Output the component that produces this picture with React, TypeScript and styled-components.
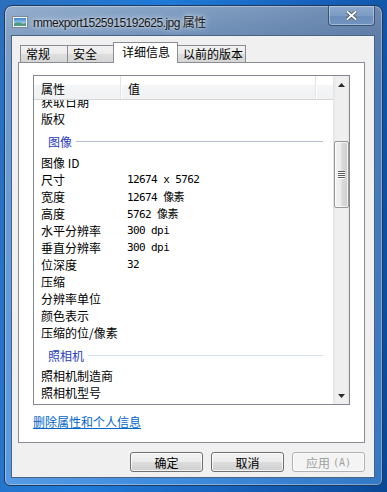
import styled, {createGlobalStyle} from "styled-components";

const GlobalStyle = createGlobalStyle`
	html, body {
		margin: 0;
		padding: 0;
		height: 492px;
		overflow: hidden;
	}
	body {
		background: linear-gradient(100deg, #2a6fbe 0%, #1f7ad8 35%, #155fb8 70%, #0a4896 100%);
		font-family: "Noto Sans CJK SC", "Noto Sans", sans-serif;
	}
`;

const Desktop = styled.div`
	width: 387px;
	height: 492px;
	padding: 5px 0 0 4px;
	box-sizing: border-box;
`;

const Frame = styled.div`
	width: 379px;
	height: 481px;
	box-sizing: border-box;
	display: flex;
	flex-direction: column;
	padding: 0 7px 7px 6px;
	border: 1px solid #20385a;
	border-radius: 8px 8px 6px 6px;
	background:
		linear-gradient(90deg, rgba(255, 255, 255, 0.12) 0%, rgba(255, 255, 255, 0) 40%, rgba(0, 30, 80, 0.18) 100%),
		linear-gradient(180deg, #86a3c6 0px, #7393bb 29px, #5d8fcb 70px, #3f8de0 100%);
	box-shadow: inset 0 0 0 1px rgba(255, 255, 255, 0.35);
`;

const TitleBar = styled.div`
	height: 29px;
	display: flex;
	align-items: center;
	flex-shrink: 0;
`;

const TitleIcon = styled.svg`
	margin: 2px 0 0 1px;
	flex-shrink: 0;
`;

const TitleText = styled.span`
	margin: 1px 0 0 5px;
	font-family: "Liberation Sans", "Noto Sans CJK SC", sans-serif;
	font-size: 12px;
	letter-spacing: -0.5px;
	color: #141414;
	text-shadow: 0 0 6px rgba(255, 255, 255, 0.9), 0 0 2px rgba(255, 255, 255, 0.6);
	white-space: nowrap;
`;

const CloseButton = styled.div`
	margin-left: auto;
	align-self: flex-start;
	width: 47px;
	height: 20px;
	box-sizing: border-box;
	display: flex;
	align-items: center;
	justify-content: center;
	border: 1px solid #3a5476;
	border-top: none;
	border-radius: 0 0 4px 4px;
	background: linear-gradient(180deg, #8eaacd 0%, #7c9cc4 50%, #6a8dba 51%, #7394c0 100%);
	box-shadow: inset 0 0 0 1px rgba(255, 255, 255, 0.35);
`;

const Client = styled.div`
	flex: 1;
	display: flex;
	flex-direction: column;
	box-sizing: border-box;
	padding: 6px 9px 5px 6px;
	background: #f0f0f0;
	border: 1px solid #4a6384;
`;

const TabStrip = styled.div`
	height: 20px;
	display: flex;
	align-items: flex-end;
	padding-left: 2px;
	flex-shrink: 0;
`;

const Tab = styled.div<{$active?: boolean; $w: number}>`
	width: ${p => p.$w}px;
	height: ${p => (p.$active ? 21 : 17)}px;
	margin-left: -1px;
	margin-bottom: ${p => (p.$active ? -1 : 0)}px;
	padding-left: ${p => (p.$active ? 8 : 5)}px;
	box-sizing: border-box;
	position: relative;
	z-index: ${p => (p.$active ? 2 : 1)};
	border: 1px solid #898c95;
	border-bottom: none;
	background: ${p => (p.$active ? "#ffffff" : "linear-gradient(180deg, #f2f2f2 0%, #ebebeb 50%, #dedede 51%, #d6d6d6 100%)")};
	font-size: 12px;
	line-height: ${p => (p.$active ? 18 : 16)}px;
	color: #000;
	white-space: nowrap;

	&:first-child {
		margin-left: 0;
	}
`;

const Panel = styled.div`
	height: 381px;
	box-sizing: border-box;
	display: flex;
	flex-direction: column;
	padding: 12px 14px 0 14px;
	background: #ffffff;
	border: 1px solid #898c95;
	flex-shrink: 0;
`;

const ListBox = styled.div`
	height: 330px;
	box-sizing: border-box;
	display: flex;
	border: 1px solid #828790;
	background: #ffffff;
`;

const ListMain = styled.div`
	flex: 1;
	display: flex;
	flex-direction: column;
	min-width: 0;
`;

const Header = styled.div`
	height: 24px;
	box-sizing: border-box;
	display: flex;
	flex-shrink: 0;
	background: linear-gradient(180deg, #ffffff 0%, #ffffff 40%, #f4f5f7 41%, #f1f2f4 100%);
	border-bottom: 1px solid #d5d5d5;
`;

const HeadCell = styled.div<{$w?: number}>`
	${p => (p.$w ? `width: ${p.$w}px;` : "flex: 1;")}
	box-sizing: border-box;
	padding: 1px 0 0 7px;
	display: flex;
	align-items: center;
	font-size: 12px;
	color: #000;
	border-right: ${p => (p.$w ? "1px solid #e3e4e6" : "none")};
	box-shadow: ${p => (p.$w ? "1px 0 0 #ffffff" : "none")};
`;

const Body = styled.div`
	flex: 1;
	overflow: hidden;
`;

const Rows = styled.div`
	margin-top: -7px;
`;

const Row = styled.div`
	height: 17px;
	display: flex;
	align-items: center;
	white-space: nowrap;
`;

const Name = styled.span`
	width: 87px;
	box-sizing: border-box;
	padding-left: 7px;
	font-size: 12px;
	color: #000;
`;

const Value = styled.span`
	padding-left: 6px;
	font-family: "DejaVu Sans Mono", "Noto Sans CJK SC", monospace;
	font-size: 11px;
	letter-spacing: -0.6px;
	color: #000;
`;

const Group = styled.div`
	height: 26.5px;
	box-sizing: border-box;
	padding: 3px 10px 0 14px;
	display: flex;
	align-items: center;
`;

const GroupLabel = styled.span`
	font-size: 12px;
	color: #2a40bd;
`;

const GroupLine = styled.div<{$faint?: boolean}>`
	flex: 1;
	height: 1px;
	margin-left: 4px;
	background: ${p => (p.$faint ? "#d5ddee" : "#b3bed6")};
`;

const ScrollBar = styled.div`
	width: 16px;
	display: flex;
	flex-direction: column;
	background: linear-gradient(90deg, #e4e4e4 0%, #efefef 20%, #f0f0f0 80%, #e8e8e8 100%);
`;

const Arrow = styled.div`
	height: 17px;
	display: flex;
	align-items: center;
	justify-content: center;
	flex-shrink: 0;
`;

const Track = styled.div`
	flex: 1;
`;

const Thumb = styled.div`
	margin: 48px 0 0 1px;
	width: 15px;
	height: 67px;
	box-sizing: border-box;
	display: flex;
	align-items: center;
	justify-content: center;
	border: 1px solid #979797;
	border-radius: 2px;
	background: linear-gradient(90deg, #f4f4f4 0%, #ebebeb 45%, #dadada 55%, #cfcfcf 100%);
	box-shadow: inset 0 0 0 1px rgba(255, 255, 255, 0.7);
`;

const Link = styled.a`
	margin-top: 9px;
	align-self: flex-start;
	font-size: 12px;
	line-height: 16px;
	color: #0066cc;
	text-decoration: underline;
	cursor: pointer;
`;

const Buttons = styled.div`
	margin-top: 9px;
	display: flex;
	justify-content: flex-end;
	gap: 8px;
`;

const Button = styled.div<{$disabled?: boolean}>`
	width: 73px;
	height: 20px;
	box-sizing: border-box;
	display: flex;
	align-items: center;
	justify-content: center;
	border: 1px solid ${p => (p.$disabled ? "#adb2b5" : "#707070")};
	border-radius: 3px;
	background: ${p => (p.$disabled ? "#f4f4f4" : "linear-gradient(180deg, #f2f2f2 0%, #ebebeb 50%, #dddddd 51%, #cfcfcf 100%)")};
	box-shadow: inset 0 0 0 1px rgba(255, 255, 255, 0.75);
	font-size: 12px;
	color: ${p => (p.$disabled ? "#a0a0a0" : "#000")};
`;

const Hotkey = styled.span`
	margin-left: 3px;
	font-family: "DejaVu Sans Mono", monospace;
	font-size: 10px;
`;

type Item = {name: string; value?: string} | {group: string; faint?: boolean};

const items: Item[] = [
	{name: "获取日期"},
	{name: "版权"},
	{group: "图像"},
	{name: "图像 ID"},
	{name: "尺寸", value: "12674 x 5762"},
	{name: "宽度", value: "12674 像素"},
	{name: "高度", value: "5762 像素"},
	{name: "水平分辨率", value: "300 dpi"},
	{name: "垂直分辨率", value: "300 dpi"},
	{name: "位深度", value: "32"},
	{name: "压缩"},
	{name: "分辨率单位"},
	{name: "颜色表示"},
	{name: "压缩的位/像素"},
	{group: "照相机", faint: true},
	{name: "照相机制造商"},
	{name: "照相机型号"},
];

const App = () => (
	<Desktop>
		<GlobalStyle/>
		<Frame>
			<TitleBar>
				<TitleIcon width="16" height="12" viewBox="0 0 16 12">
					<defs>
						<linearGradient id="sky" x1="0" y1="0" x2="0" y2="1">
							<stop offset="0" stopColor="#3d86cf"/>
							<stop offset="1" stopColor="#d8eef8"/>
						</linearGradient>
					</defs>
					<rect x="0.5" y="0.5" width="15" height="11" fill="#f4f4f4" stroke="#7f8a96"/>
					<rect x="2" y="2" width="12" height="8" fill="url(#sky)"/>
					<path d="M2 10 L2 7.5 Q6 5.5 9 7 T14 6.5 L14 10 Z" fill="#4f9a82"/>
				</TitleIcon>
				<TitleText>mmexport1525915192625.jpg 属性</TitleText>
				<CloseButton>
					<svg width="11" height="9" viewBox="0 0 11 9">
						<path d="M1.5 1 L9.5 8 M9.5 1 L1.5 8" stroke="#3a4a5e" strokeWidth="3.4" strokeLinecap="square"/>
						<path d="M1.5 1 L9.5 8 M9.5 1 L1.5 8" stroke="#ffffff" strokeWidth="2" strokeLinecap="square"/>
					</svg>
				</CloseButton>
			</TitleBar>
			<Client>
				<TabStrip>
					<Tab $w={48}>常规</Tab>
					<Tab $w={47}>安全</Tab>
					<Tab $w={65} $active>详细信息</Tab>
					<Tab $w={69}>以前的版本</Tab>
				</TabStrip>
				<Panel>
					<ListBox>
						<ListMain>
							<Header>
								<HeadCell $w={87}>属性</HeadCell>
								<HeadCell $w={195}>值</HeadCell>
								<HeadCell/>
							</Header>
							<Body>
								<Rows>
									{items.map((it, i) =>
										"group" in it ? (
											<Group key={i}>
												<GroupLabel>{it.group}</GroupLabel>
												<GroupLine $faint={it.faint}/>
											</Group>
										) : (
											<Row key={i}>
												<Name>{it.name}</Name>
												{it.value && <Value>{it.value}</Value>}
											</Row>
										)
									)}
								</Rows>
							</Body>
						</ListMain>
						<ScrollBar>
							<Arrow>
								<svg width="7" height="4" viewBox="0 0 7 4"><path d="M3.5 0 L7 4 L0 4 Z" fill="#2b2b2b"/></svg>
							</Arrow>
							<Track>
								<Thumb>
									<svg width="7" height="8" viewBox="0 0 7 8">
										<path d="M0 0.5 H7 M0 2.5 H7 M0 4.5 H7 M0 6.5 H7" stroke="#5a5a5a" strokeWidth="1"/>
										<path d="M0 1.5 H7 M0 3.5 H7 M0 5.5 H7 M0 7.5 H7" stroke="#ffffff" strokeWidth="1"/>
									</svg>
								</Thumb>
							</Track>
							<Arrow>
								<svg width="7" height="4" viewBox="0 0 7 4"><path d="M0 0 L7 0 L3.5 4 Z" fill="#2b2b2b"/></svg>
							</Arrow>
						</ScrollBar>
					</ListBox>
					<Link>删除属性和个人信息</Link>
				</Panel>
				<Buttons>
					<Button>确定</Button>
					<Button>取消</Button>
					<Button $disabled>应用<Hotkey>(A)</Hotkey></Button>
				</Buttons>
			</Client>
		</Frame>
	</Desktop>
);

export default App;
